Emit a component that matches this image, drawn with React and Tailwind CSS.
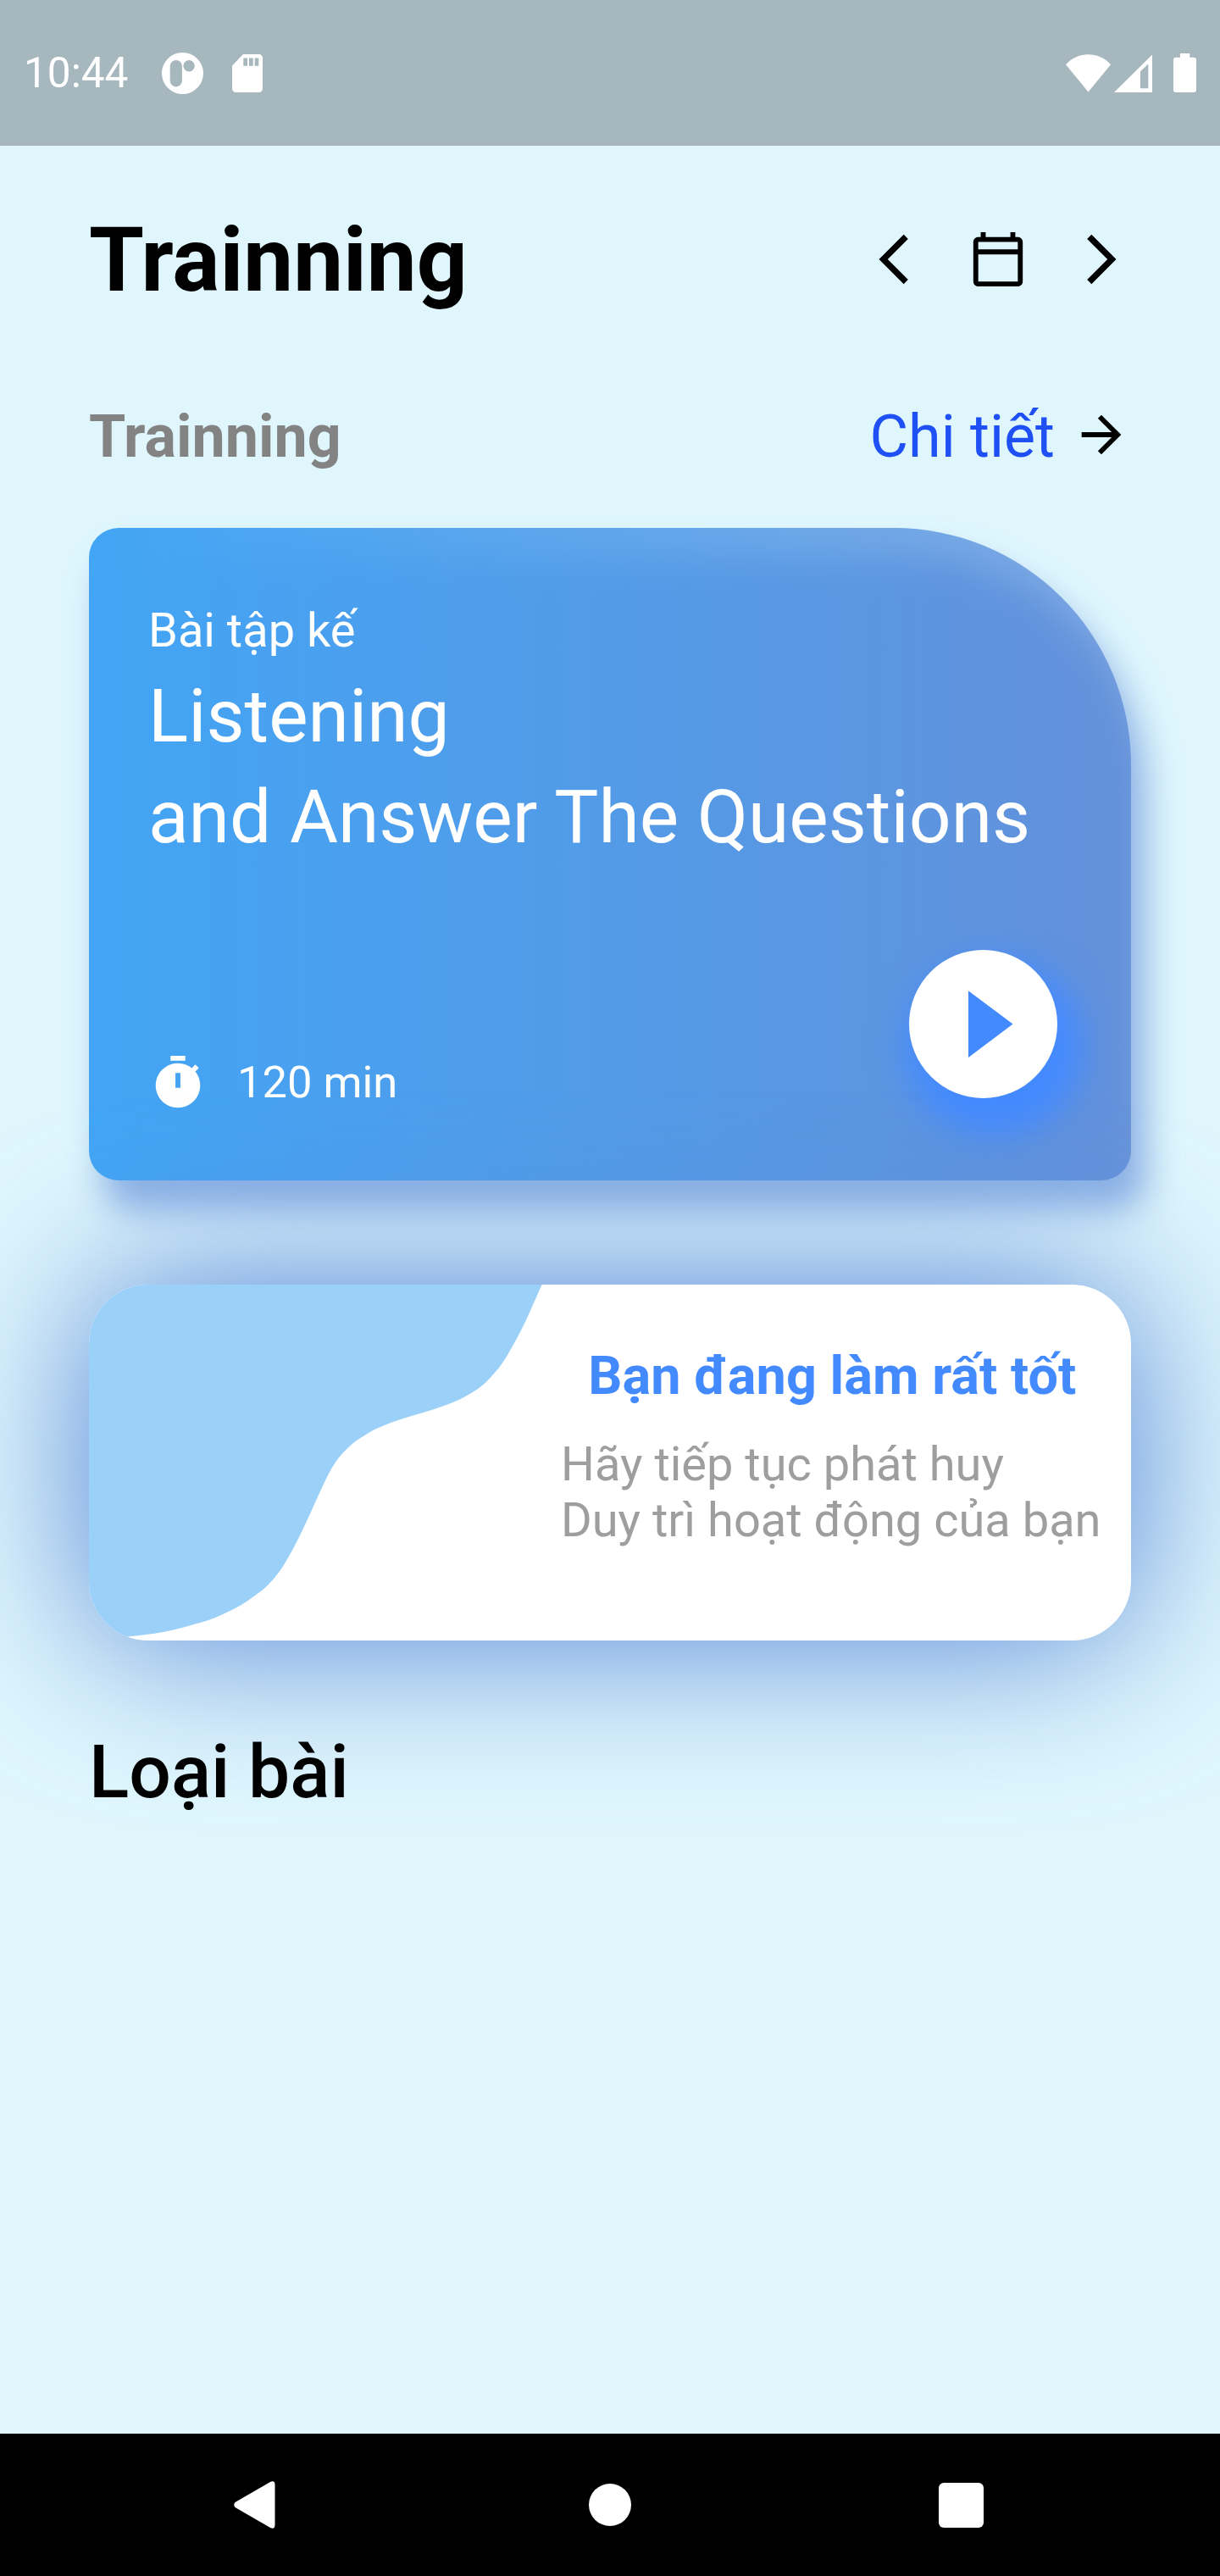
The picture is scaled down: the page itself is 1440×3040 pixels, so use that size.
import React from "react";

const svgProps = { viewBox: "0 0 24 24", fill: "currentColor", "aria-hidden": true };

function Icon({ d, className }) {
  return (
    <svg {...svgProps} className={className}>
      <path d={d} />
    </svg>
  );
}

const ICONS = {
  back: "M17.77 3.77 16 2 6 12l10 10 1.77-1.77L9.54 12z",
  forward: "M6.23 20.23 8 22l10-10L8 2 6.23 3.77 14.46 12z",
  calendar:
    "M20 3h-1V1h-2v2H7V1H5v2H4c-1.1 0-2 .9-2 2v16c0 1.1.9 2 2 2h16c1.1 0 2-.9 2-2V5c0-1.1-.9-2-2-2zm0 18H4V10h16v11zm0-13H4V5h16v3z",
  arrow: "M12 4l-1.41 1.41L16.17 11H4v2h12.17l-5.58 5.59L12 20l8-8z",
  timer:
    "M9 1h6v2H9zM19.03 7.39l1.42-1.42c-.43-.51-.9-.99-1.41-1.41l-1.42 1.42C16.07 4.74 14.12 4 12 4c-4.97 0-9 4.03-9 9s4.02 9 9 9 9-4.03 9-9c0-2.12-.74-4.07-1.97-5.61zM13 14h-2V8h2z",
};

function StatusBar() {
  return (
    <header className="flex h-[172px] shrink-0 items-center justify-between bg-[#a7b7be] pl-[28px] pr-[28px] text-white">
      <div className="flex items-center">
        <span className="w-[163px] pt-[2px] text-[49.5px] leading-none">10:44</span>
        <svg viewBox="0 0 49 49" className="size-[49px]" fill="currentColor" fillRule="evenodd">
          <path d="M24.5 0a24.5 24.5 0 1 0 0 49a24.5 24.5 0 1 0 0-49zM16.8 9a7.1 7.1 0 0 1 7.1 7.1v17.2a7.1 7.1 0 0 1-14.2 0V16.1a7.1 7.1 0 0 1 7.1-7.1zM32.1 9a6.7 6.7 0 1 1 0 13.4a6.7 6.7 0 1 1 0-13.4z" />
        </svg>
        <svg viewBox="0 0 36 45" className="ml-[34px] h-[45px] w-[36px]" fill="currentColor" fillRule="evenodd">
          <path d="M13 0H31.5A4.5 4.5 0 0 1 36 4.5V40.5A4.5 4.5 0 0 1 31.5 45H4.500A4.5 4.5 0 0 1 0 40.500V13.500zM13.300 4.500V13.800H18V4.500zM20 4.500V13.800H24.700V4.500zM26.700 4.500V13.800H31.300V4.500z" />
        </svg>
      </div>
      <div className="flex items-center">
        <svg viewBox="0 0 53 45" className="h-[45px] w-[53px]" fill="currentColor">
          <path d="M0 12.200C7.500 4 16.500 .300 26.500 .300S45.500 4 53 12.200L26.500 44.600z" />
        </svg>
        <svg viewBox="0 0 45 45" className="ml-[4px] size-[45px]" fill="currentColor" fillRule="evenodd">
          <path d="M0 45L45 .500V45zM31 20.300V40.300H40.300V11.500z" />
        </svg>
        <svg viewBox="0 0 27 46" className="ml-[25px] h-[46px] w-[27px]" fill="currentColor">
          <path d="M8 0H19.300V4.700H24A3 3 0 0 1 27 7.700V43A3 3 0 0 1 24 46H3A3 3 0 0 1 0 43V7.700A3 3 0 0 1 3 4.700H8z" />
        </svg>
      </div>
    </header>
  );
}

function LessonCard() {
  return (
    <div className="relative isolate mt-[75px]">
      <div className="absolute inset-0 -z-10 translate-x-[17.5px] translate-y-[35px] rounded-[35px] rounded-tr-[280px] bg-[#5583d5]/60 blur-[20.7px]" />
      <section className="flex h-[770px] flex-col justify-between rounded-[35px] rounded-tr-[280px] bg-linear-to-r/srgb from-[#42a5f5] to-[#4f80d4]/66 px-[70px] pb-[80px] pt-[93px] text-white">
        <div>
          <p className="text-[56px] leading-none">Bài tập kế</p>
          <p className="mt-[14px] whitespace-nowrap text-[87.5px] leading-[119px]">
            Listening
            <br />
            and Answer The Questions
          </p>
        </div>
        <div className="flex items-end justify-between">
          <div className="flex gap-[35px]">
            <Icon d={ICONS.timer} className="size-[70px]" />
            <span className="pt-[8px] text-[52.5px] leading-none">120 min</span>
          </div>
          <button aria-label="Play" className="relative flex size-[210px] items-center justify-center">
            <span className="absolute inset-0 translate-x-[14px] translate-y-[28px] rounded-full bg-[#448aff] blur-[20.7px]" />
            <span className="relative flex size-[175px] items-center justify-center rounded-full bg-white">
              <svg viewBox="0 0 20 20" className="size-full text-[#448aff]" fill="currentColor">
                <path d="M8 5.500v9l6-4.500z" />
              </svg>
            </span>
          </button>
        </div>
      </section>
    </div>
  );
}

function PraiseCard() {
  return (
    <div className="relative isolate mt-[122.5px]">
      <div className="absolute inset-0 -z-10 rounded-[70px] bg-[#5080d4] blur-[95px]" />
      <section className="flex h-[420px] overflow-hidden rounded-[70px] bg-white">
        <svg viewBox="0 0 557 420" className="h-[420px] w-[557px] shrink-0" fill="#9bd1f8">
          <path d="M0 0H534.6C524.600 22 515 46 504.700 64C495 82 487 96 475.800 107.500C467 118 457 125 446 131C434 138 422 142 408.300 146.800C392 152 376 156 359.600 161.800C347 166.500 337 170.500 326.600 177.300C319 181.500 311 187 305 193.300C296 202 291 209 285.300 219C276 236 270 251 262.300 267.500C256 281 250 295 242.600 308.600C236 321 229 334 221 343.600C213 354 204 362 193.400 368.800C184 376 176 380.500 165.900 385.300C153 392 139 397 124.600 400.800C112 404.500 101 407.500 87.800 410C74 412.500 61 414 47.400 415.300L0 419z" />
        </svg>
        <div className="flex flex-col whitespace-nowrap pt-[76px]">
          <h3 className="pl-[3px] text-center text-[63px] font-bold leading-none text-[#448aff]">Bạn đang làm rất tốt</h3>
          <p className="mt-[40px] text-[56px] leading-[66px] text-[#9e9e9e]">
            Hãy tiếp tục phát huy
            <br />
            Duy trì hoạt động của bạn
          </p>
        </div>
      </section>
    </div>
  );
}

function NavBar() {
  return (
    <nav className="flex h-[168px] shrink-0 items-center justify-between bg-black pl-[276px] pr-[279px] text-white">
      <svg viewBox="0 0 49 56" className="h-[56px] w-[49px]" fill="currentColor">
        <path d="M1.500 25L43.500 .800Q48.500-1 48.500 4V52Q48.500 57 43.500 55.200L1.500 31Q-1 28 1.500 25z" />
      </svg>
      <span className="ml-[6px] size-[50px] rounded-full bg-white" />
      <span className="size-[53px] rounded-[6px] bg-white" />
    </nav>
  );
}

export default function App() {
  return (
    <div className="flex h-[3040px] w-[1440px] flex-col overflow-hidden bg-[#dff6fd] font-['Roboto',sans-serif] text-black">
      <StatusBar />
      <main className="flex-1 px-[105px] pt-[82px]">
        <div className="flex h-[105px] items-start justify-between">
          <h1 className="pt-px text-[105px] font-bold leading-none">Trainning</h1>
          <div className="flex gap-[52.5px] pt-[17px]">
            <Icon d={ICONS.back} className="size-[70px]" />
            <Icon d={ICONS.calendar} className="size-[70px]" />
            <Icon d={ICONS.forward} className="size-[70px]" />
          </div>
        </div>
        <div className="mt-[119px] flex h-[70px] items-start justify-between">
          <h2 className="pt-[2px] text-[70px] font-bold leading-none text-[#838383]">Trainning</h2>
          <div className="flex items-start gap-[20px]">
            <span className="pt-[2px] text-[70px] leading-none text-[#1e50f5]">Chi tiết</span>
            <Icon d={ICONS.arrow} className="size-[70px]" />
          </div>
        </div>
        <LessonCard />
        <PraiseCard />
        <h2 className="relative mt-[112px] text-[87.5px] font-medium leading-none">Loại bài</h2>
      </main>
      <NavBar />
    </div>
  );
}
